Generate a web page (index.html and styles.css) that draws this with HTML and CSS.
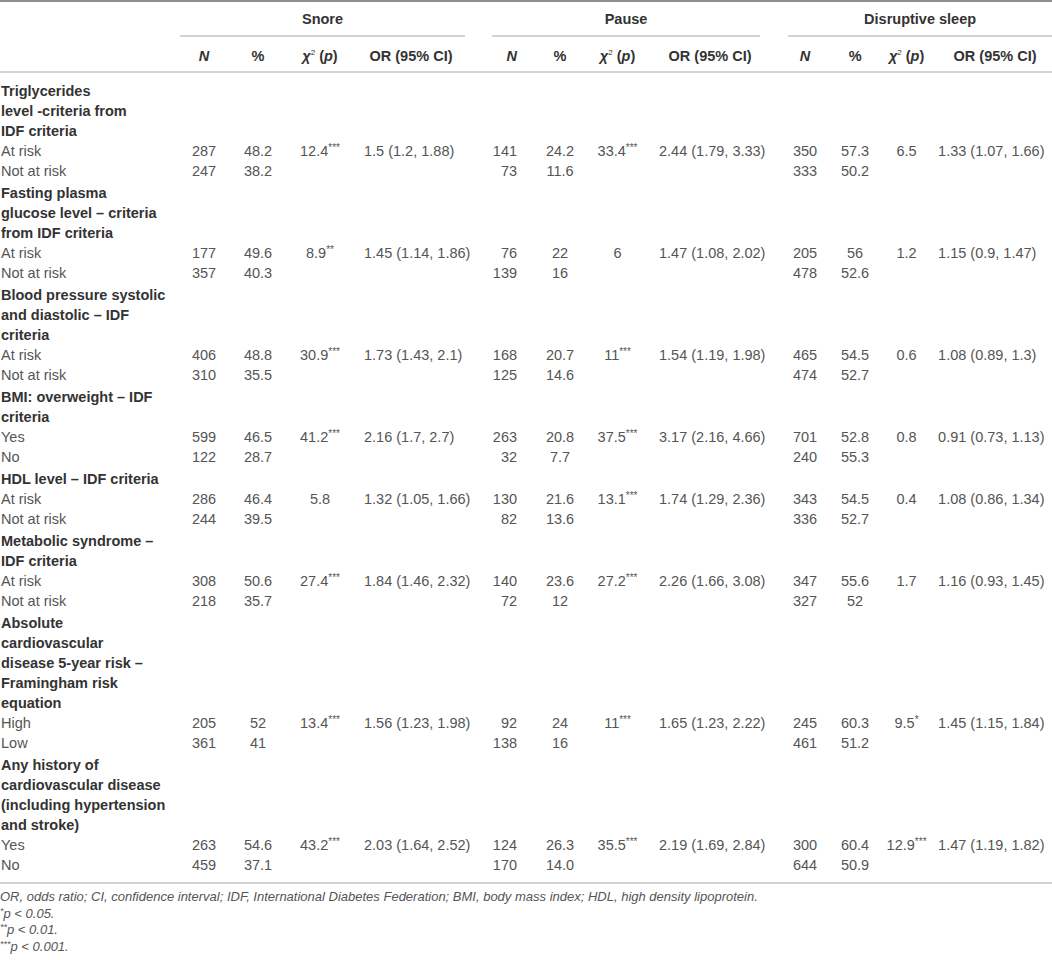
FILE: index.html
```html
<!DOCTYPE html>
<html lang="en">
<head>
    <meta charset="UTF-8">
    <title>Sleep disturbance and cardiometabolic risk</title>
<link rel="stylesheet" href="styles.css">
</head>

<body>
<div class="table-wrap">
    <table class="data-table">
        <colgroup>
            <col style="width:180px">
            <col style="width:48px"><col style="width:60px"><col style="width:64px"><col style="width:118px">
            <col style="width:60px"><col style="width:60px"><col style="width:55px"><col style="width:130px">
            <col style="width:60px"><col style="width:40px"><col style="width:63px"><col style="width:114px">
        </colgroup>
        <thead>
            <tr class="group-row">
                <th></th>
                <th colspan="4"><div class="group group-snore">Snore</div></th>
                <th colspan="4"><div class="group group-pause">Pause</div></th>
                <th colspan="4"><div class="group group-disrupt">Disruptive sleep</div></th>
            </tr>
            <tr class="sub-row">
                <th></th>
                <th><i>N</i></th><th>%</th><th><i>χ</i><sup>2</sup> (<i>p</i>)</th><th>OR (95% CI)</th>
                <th><i>N</i></th><th>%</th><th><i>χ</i><sup>2</sup> (<i>p</i>)</th><th>OR (95% CI)</th>
                <th><i>N</i></th><th>%</th><th><i>χ</i><sup>2</sup> (<i>p</i>)</th><th>OR (95% CI)</th>
            </tr>
        </thead>
        <tbody>
            <!-- 甘油三酯 -->
            <tr class="title-row first"><td colspan="13">Triglycerides<br>level -criteria from<br>IDF criteria</td></tr>
            <tr><td>At risk</td><td>287</td><td>48.2</td><td>12.4<sup>***</sup></td><td>1.5 (1.2, 1.88)</td><td>141</td><td>24.2</td><td>33.4<sup>***</sup></td><td>2.44 (1.79, 3.33)</td><td>350</td><td>57.3</td><td>6.5</td><td>1.33 (1.07, 1.66)</td></tr>
            <tr><td>Not at risk</td><td>247</td><td>38.2</td><td></td><td></td><td>73</td><td>11.6</td><td></td><td></td><td>333</td><td>50.2</td><td></td><td></td></tr>

            <tr class="title-row"><td colspan="13">Fasting plasma<br>glucose level – criteria<br>from IDF criteria</td></tr>
            <tr><td>At risk</td><td>177</td><td>49.6</td><td>8.9<sup>**</sup></td><td>1.45 (1.14, 1.86)</td><td>76</td><td>22</td><td>6</td><td>1.47 (1.08, 2.02)</td><td>205</td><td>56</td><td>1.2</td><td>1.15 (0.9, 1.47)</td></tr>
            <tr><td>Not at risk</td><td>357</td><td>40.3</td><td></td><td></td><td>139</td><td>16</td><td></td><td></td><td>478</td><td>52.6</td><td></td><td></td></tr>

            <tr class="title-row"><td colspan="13">Blood pressure systolic<br>and diastolic – IDF<br>criteria</td></tr>
            <tr><td>At risk</td><td>406</td><td>48.8</td><td>30.9<sup>***</sup></td><td>1.73 (1.43, 2.1)</td><td>168</td><td>20.7</td><td>11<sup>***</sup></td><td>1.54 (1.19, 1.98)</td><td>465</td><td>54.5</td><td>0.6</td><td>1.08 (0.89, 1.3)</td></tr>
            <tr><td>Not at risk</td><td>310</td><td>35.5</td><td></td><td></td><td>125</td><td>14.6</td><td></td><td></td><td>474</td><td>52.7</td><td></td><td></td></tr>

            <tr class="title-row"><td colspan="13">BMI: overweight – IDF<br>criteria</td></tr>
            <tr><td>Yes</td><td>599</td><td>46.5</td><td>41.2<sup>***</sup></td><td>2.16 (1.7, 2.7)</td><td>263</td><td>20.8</td><td>37.5<sup>***</sup></td><td>3.17 (2.16, 4.66)</td><td>701</td><td>52.8</td><td>0.8</td><td>0.91 (0.73, 1.13)</td></tr>
            <tr><td>No</td><td>122</td><td>28.7</td><td></td><td></td><td>32</td><td>7.7</td><td></td><td></td><td>240</td><td>55.3</td><td></td><td></td></tr>

            <tr class="title-row"><td colspan="13">HDL level – IDF criteria</td></tr>
            <tr><td>At risk</td><td>286</td><td>46.4</td><td>5.8</td><td>1.32 (1.05, 1.66)</td><td>130</td><td>21.6</td><td>13.1<sup>***</sup></td><td>1.74 (1.29, 2.36)</td><td>343</td><td>54.5</td><td>0.4</td><td>1.08 (0.86, 1.34)</td></tr>
            <tr><td>Not at risk</td><td>244</td><td>39.5</td><td></td><td></td><td>82</td><td>13.6</td><td></td><td></td><td>336</td><td>52.7</td><td></td><td></td></tr>

            <tr class="title-row"><td colspan="13">Metabolic syndrome –<br>IDF criteria</td></tr>
            <tr><td>At risk</td><td>308</td><td>50.6</td><td>27.4<sup>***</sup></td><td>1.84 (1.46, 2.32)</td><td>140</td><td>23.6</td><td>27.2<sup>***</sup></td><td>2.26 (1.66, 3.08)</td><td>347</td><td>55.6</td><td>1.7</td><td>1.16 (0.93, 1.45)</td></tr>
            <tr><td>Not at risk</td><td>218</td><td>35.7</td><td></td><td></td><td>72</td><td>12</td><td></td><td></td><td>327</td><td>52</td><td></td><td></td></tr>

            <tr class="title-row"><td colspan="13">Absolute<br>cardiovascular<br>disease 5-year risk –<br>Framingham risk<br>equation</td></tr>
            <tr><td>High</td><td>205</td><td>52</td><td>13.4<sup>***</sup></td><td>1.56 (1.23, 1.98)</td><td>92</td><td>24</td><td>11<sup>***</sup></td><td>1.65 (1.23, 2.22)</td><td>245</td><td>60.3</td><td>9.5<sup>*</sup></td><td>1.45 (1.15, 1.84)</td></tr>
            <tr><td>Low</td><td>361</td><td>41</td><td></td><td></td><td>138</td><td>16</td><td></td><td></td><td>461</td><td>51.2</td><td></td><td></td></tr>

            <tr class="title-row"><td colspan="13">Any history of<br>cardiovascular disease<br>(including hypertension<br>and stroke)</td></tr>
            <tr><td>Yes</td><td>263</td><td>54.6</td><td>43.2<sup>***</sup></td><td>2.03 (1.64, 2.52)</td><td>124</td><td>26.3</td><td>35.5<sup>***</sup></td><td>2.19 (1.69, 2.84)</td><td>300</td><td>60.4</td><td>12.9<sup>***</sup></td><td>1.47 (1.19, 1.82)</td></tr>
            <tr class="last"><td>No</td><td>459</td><td>37.1</td><td></td><td></td><td>170</td><td>14.0</td><td></td><td></td><td>644</td><td>50.9</td><td></td><td></td></tr>
        </tbody>
    </table>

    <!-- 表注 -->
    <div class="notes">
        <p>OR, odds ratio; CI, confidence interval; IDF, International Diabetes Federation; BMI, body mass index; HDL, high density lipoprotein.</p>
        <p><sup>*</sup>p &lt; 0.05.</p>
        <p><sup>**</sup>p &lt; 0.01.</p>
        <p><sup>***</sup>p &lt; 0.001.</p>
    </div>
</div>
</body>
</html>
```

FILE: styles.css
```css
/* 页面基础 */
body {
    margin: 0;
    background: #ffffff;
    font-family: "Liberation Sans", Arial, sans-serif;
    font-size: 14.5px;
    color: #555;
}

.table-wrap {
    width: 1052px;
}

.data-table {
    width: 1052px;
    table-layout: fixed;
    border-collapse: separate;
    border-spacing: 0;
}

.data-table th,
.data-table td {
    padding: 0;
    line-height: 20px;
    white-space: nowrap;
}

/* 表头 */
.data-table thead th {
    font-weight: bold;
    color: #333;
    text-align: center;
}

.group-row th {
    border-top: 2px solid #8e8e8e;
    padding-top: 7px;
}

.group {
    padding-bottom: 6px;
    border-bottom: 2px solid #d2d2d2;
}

.group-snore {
    margin-right: 5px;
}

.group-pause {
    margin-left: 22px;
    margin-right: 15px;
}

.group-disrupt {
    margin-left: 13px;
}

.sub-row th {
    padding-top: 9px;
    padding-bottom: 5px;
    border-bottom: 2px solid #d2d2d2;
}

.sub-row th:nth-child(6) {
    text-align: right;
    padding-right: 13px;
}

sup {
    font-size: 10px;
    line-height: 0;
    vertical-align: 5px;
}

.sub-row sup {
    font-size: 8px;
    font-weight: normal;
    vertical-align: 6px;
}

/* 数据行 */
.data-table tbody td {
    text-align: center;
}

.data-table tbody td:nth-child(1) {
    text-align: left;
    padding-left: 1px;
}

.data-table tbody td:nth-child(5) {
    text-align: left;
    padding-left: 12px;
}

.data-table tbody td:nth-child(6) {
    text-align: right;
    padding-right: 13px;
}

.data-table tbody td:nth-child(9) {
    text-align: left;
    padding-left: 14px;
}

.data-table tbody td:nth-child(13) {
    text-align: left;
}

.title-row td {
    padding-top: 2px;
    font-weight: bold;
    color: #333;
}

.data-table .title-row td {
    text-align: left;
    padding-left: 1px;
}

.title-row.first td {
    padding-top: 8px;
}

.last td {
    padding-bottom: 7px;
    border-bottom: 2px solid #d2d2d2;
}

/* 表注 */
.notes {
    margin-top: 5px;
    font-size: 13px;
    font-style: italic;
    color: #555;
}

.notes p {
    margin: 0;
    line-height: 16.7px;
}

.notes sup {
    font-size: 9px;
    vertical-align: 4px;
}
```
